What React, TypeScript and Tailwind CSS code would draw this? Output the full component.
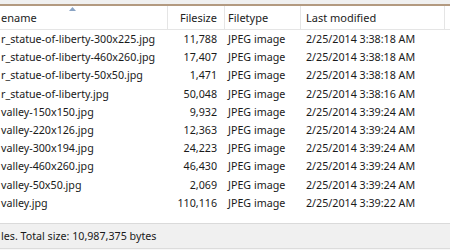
const rows = [
  { name: "r_statue-of-liberty-300x225.jpg", size: "11,788", date: "2/25/2014 3:38:18 AM" },
  { name: "r_statue-of-liberty-460x260.jpg", size: "17,407", date: "2/25/2014 3:38:18 AM" },
  { name: "r_statue-of-liberty-50x50.jpg", size: "1,471", date: "2/25/2014 3:38:18 AM" },
  { name: "r_statue-of-liberty.jpg", size: "50,048", date: "2/25/2014 3:38:16 AM" },
  { name: "valley-150x150.jpg", size: "9,932", date: "2/25/2014 3:39:24 AM" },
  { name: "valley-220x126.jpg", size: "12,363", date: "2/25/2014 3:39:24 AM" },
  { name: "valley-300x194.jpg", size: "24,223", date: "2/25/2014 3:39:24 AM" },
  { name: "valley-460x260.jpg", size: "46,430", date: "2/25/2014 3:39:24 AM" },
  { name: "valley-50x50.jpg", size: "2,069", date: "2/25/2014 3:39:24 AM" },
  { name: "valley.jpg", size: "110,116", date: "2/25/2014 3:39:22 AM" },
];

export default function App() {
  return (
    <div
      className="flex h-[250px] w-[450px] flex-col overflow-hidden bg-white text-[10.7px] text-[#1a1a1a]"
      style={{ fontFamily: '"Noto Sans", "Liberation Sans", sans-serif' }}
    >
      <div className="h-[4px] shrink-0 bg-[#f0f0f0]" />
      <div className="h-[2px] shrink-0 bg-[#b39a80]" />

      {/* column header */}
      <div className="flex h-[24px] shrink-0 items-center border-b border-[#e5e5e5] text-[11px] text-[#222]">
        <div className="relative flex h-full w-[168px] items-center border-r border-[#e5e5e5] pl-[1px] pt-[1px]">
          ename
          <svg className="absolute left-[69px] top-[1px]" width="7" height="4" viewBox="0 0 7 4">
            <path d="M0 4 L3.5 0 L7 4 Z" fill="#8aa4c4" />
          </svg>
        </div>
        <div className="flex h-full w-[57px] items-center justify-end border-r border-[#e5e5e5] pr-[7px] pt-[1px]">
          Filesize
        </div>
        <div className="flex h-full w-[76px] items-center border-r border-[#e5e5e5] pl-[3px] pt-[1px]">
          Filetype
        </div>
        <div className="flex h-full w-[144px] items-center border-r border-[#e5e5e5] pl-[5px] pt-[1px]">
          Last modified
        </div>
      </div>

      {/* rows */}
      <div className="flex flex-col">
        {rows.map((r) => (
          <div key={r.name} className="flex h-[18.2px] items-center whitespace-nowrap">
            <div className="w-[168px] pl-[1px]">{r.name}</div>
            <div className="w-[57px] pr-[8px] text-right">{r.size}</div>
            <div className="w-[76px] pl-[3px]">JPEG image</div>
            <div className="w-[144px] pl-[5px]">{r.date}</div>
          </div>
        ))}
      </div>

      <div className="flex-1" />

      {/* status bar */}
      <div className="flex h-[25px] shrink-0 items-center border-t border-[#dadada] bg-[#f0f0f0] pl-[1px]">
        les. Total size: 10,987,375 bytes
      </div>
      <div className="h-[2px] shrink-0 border-t border-[#dcdcdc] bg-[#f7f7f7]" />
    </div>
  );
}
